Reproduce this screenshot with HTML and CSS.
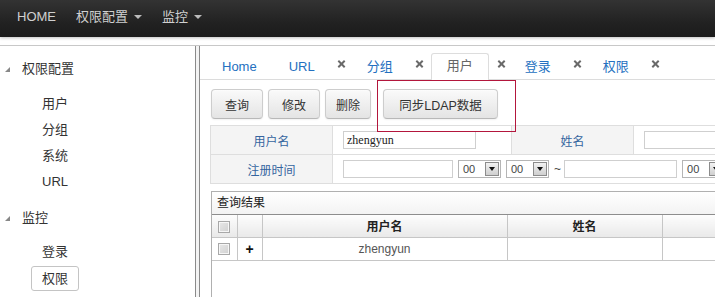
FILE: index.html
```html
<!DOCTYPE html>
<html>
<head>
<meta charset="utf-8">
<link rel="stylesheet" href="styles.css">
</head>
<body>
<div class="navbar">
  <a class="nav-link">HOME</a>
  <a class="nav-link">权限配置<span class="caret"></span></a>
  <a class="nav-link">监控<span class="caret"></span></a>
</div>
<div class="layout">
  <aside class="sidebar">
    <ul class="tree">
      <li class="group">
        <div class="node head"><span class="tri"></span>权限配置</div>
        <ul class="children">
          <li class="node">用户</li>
          <li class="node">分组</li>
          <li class="node">系统</li>
          <li class="node">URL</li>
        </ul>
      </li>
      <li class="group">
        <div class="node head"><span class="tri"></span>监控</div>
        <ul class="children">
          <li class="node">登录</li>
          <li class="node"><span class="selected">权限</span></li>
        </ul>
      </li>
    </ul>
  </aside>
  <div class="splitter"></div>
  <main class="main">
    <div class="tabbar">
      <ul class="tabs">
        <li class="tab"><a class="tab-link">Home</a></li>
        <li class="tab"><a class="tab-link">URL</a><span class="close"></span></li>
        <li class="tab"><a class="tab-link">分组</a><span class="close"></span></li>
        <li class="tab active"><a class="tab-link">用户</a><span class="close"></span></li>
        <li class="tab"><a class="tab-link">登录</a><span class="close"></span></li>
        <li class="tab"><a class="tab-link">权限</a><span class="close"></span></li>
      </ul>
    </div>
    <div class="toolbar">
      <button class="btn">查询</button>
      <button class="btn">修改</button>
      <button class="btn btn-narrow">删除</button>
      <button class="btn btn-wide">同步LDAP数据</button>
    </div>
    <table class="form">
      <tr>
        <td class="lbl">用户名</td>
        <td class="fld fld1"><span class="input input-a">zhengyun</span></td>
        <td class="lbl lbl2">姓名</td>
        <td class="fld fld3"><span class="input input-c"></span></td>
      </tr>
      <tr>
        <td class="lbl">注册时间</td>
        <td class="fld" colspan="3">
          <div class="range">
            <span class="input input-b"></span>
            <span class="sel"><span class="sel-val">00</span><span class="sel-btn"></span></span>
            <span class="sel"><span class="sel-val">00</span><span class="sel-btn"></span></span>
            <span class="tilde">~</span>
            <span class="input input-d"></span>
            <span class="sel"><span class="sel-val">00</span><span class="sel-btn"></span></span>
          </div>
        </td>
      </tr>
    </table>
    <div class="result">
      <div class="result-title">查询结果</div>
      <table class="grid">
        <tr class="grid-head">
          <th class="c-chk"><span class="chk"></span></th>
          <th class="c-exp"></th>
          <th class="c-user">用户名</th>
          <th class="c-name">姓名</th>
          <th class="c-rest"></th>
        </tr>
        <tr class="grid-row">
          <td class="c-chk"><span class="chk"></span></td>
          <td class="c-exp"><span class="plus">+</span></td>
          <td class="c-user">zhengyun</td>
          <td class="c-name"></td>
          <td class="c-rest"></td>
        </tr>
      </table>
    </div>
    <div class="annot"></div>
  </main>
</div>
</body>
</html>
```
FILE: styles.css
```css
* { box-sizing: border-box; }
html, body { margin: 0; padding: 0; }
body {
  width: 715px;
  height: 297px;
  overflow: hidden;
  background: #fff;
  font-family: "Liberation Sans", "Noto Sans CJK SC", sans-serif;
  font-size: 13px;
  color: #333;
}
ul { list-style: none; margin: 0; padding: 0; }

/* navbar */
.navbar {
  height: 37px;
  display: flex;
  align-items: center;
  padding-left: 7px;
  background: linear-gradient(to bottom, #333 0%, #222 60%, #1b1b1b 100%);
  box-shadow: 0 1px 3px rgba(0,0,0,.25);
}
.nav-link {
  display: flex;
  align-items: center;
  padding: 0 10px;
  color: #d0d0d0;
  font-size: 13px;
  line-height: 20px;
  margin-top: -3px;
}
.caret {
  width: 0; height: 0;
  margin-left: 6px;
  border-top: 4px solid #bbb;
  border-left: 4px solid transparent;
  border-right: 4px solid transparent;
}

/* layout */
.layout {
  display: flex;
  margin-top: 8px;
  height: 252px;
  border-top: 1px solid #c8c8c8;
}
.sidebar {
  width: 196px;
  flex: none;
  border-right: 1px solid #8a8a8a;
  padding-top: 10px;
}
.splitter {
  width: 3px;
  flex: none;
  background: #f3f3f3;
}
.main {
  position: relative;
  flex: 1;
  min-width: 0;
  border-left: 1px solid #8a8a8a;
  padding-top: 7px;
  overflow: hidden;
}

/* tree */
.node {
  height: 26px;
  line-height: 26px;
  font-size: 13px;
  color: #333;
}
.head {
  display: flex;
  align-items: center;
  padding-left: 5px;
}
.tri {
  width: 0; height: 0;
  margin-right: 12px;
  border-bottom: 5px solid #888;
  border-left: 5px solid transparent;
}
.children { margin-top: 9px; padding-left: 42px; }
.group + .group { margin-top: 10px; }
.group + .group .children { margin-top: 8px; }
.selected {
  display: inline-block;
  margin-left: -11px;
  padding: 0 10px;
  height: 25px;
  line-height: 23px;
  border: 1px solid #c4c4c4;
  border-radius: 3px;
  margin-top: 1px;
}

/* tabs */
.tabbar {
  border-bottom: 1px solid #dcdcdc;
  padding-left: 6px;
  height: 27px;
}
.tabs { display: flex; align-items: center; }
.tab { display: flex; align-items: center; }
.tab-link {
  display: block;
  height: 26px;
  line-height: 24px;
  padding: 0 15px;
  border: 1px solid transparent;
  border-bottom: 0;
  color: #2470c0;
  font-size: 13px;
}
.tab.active .tab-link {
  border-color: #ddd;
  border-radius: 3px 3px 0 0;
  background: #fff;
  color: #666;
  height: 27px;
}
.tab.active { margin-left: 2px; }
.close {
  width: 7px; height: 7px;
  margin-left: 7px;
  margin-right: 6px;
  margin-top: -5px;
  position: relative;
}
.close::before, .close::after {
  content: "";
  position: absolute;
  left: -1px; top: 2px;
  width: 9px; height: 2px;
  background: #6a6a6a;
  transform: rotate(45deg);
}
.close::after { transform: rotate(-45deg); }
.tab.active .close { margin-left: 9px; margin-right: 4px; }

/* toolbar */
.toolbar {
  display: flex;
  gap: 5px;
  margin: 9px 0 0 11px;
}
.btn {
  height: 30px;
  padding: 0 13px;
  white-space: nowrap;
  font-family: "Liberation Sans", "Noto Sans CJK SC", sans-serif;
  font-size: 12px;
  color: #333;
  background: linear-gradient(to bottom, #fafafa, #e4e4e4);
  border: 1px solid #cdcdcd;
  border-bottom-color: #b8b8b8;
  border-radius: 4px;
  box-shadow: inset 0 1px 0 rgba(255,255,255,.4), 0 1px 2px rgba(0,0,0,.06);
}
.btn-narrow { padding: 0 10px; }
.btn-wide { margin-left: 7px; padding: 0; width: 115px; font-size: 12.5px; }

/* form */
.form {
  margin: 6px 0 0 10px;
  border-collapse: collapse;
  table-layout: fixed;
  width: 640px;
}
.form td {
  border: 1px solid #dedede;
  height: 29px;
  padding: 0;
}
.lbl {
  width: 122px;
  background: #f4f4f4;
  text-align: center;
  color: #35659f;
  font-size: 12px;
}
.fld1 { width: 179px; }
.lbl2 { width: 122px; }
.fld { padding-left: 10px !important; }
.input {
  display: inline-block;
  vertical-align: middle;
  height: 18px;
  border: 1px solid #cfcfcf;
  background: #fff;
  font-family: "Liberation Serif", serif;
  font-size: 12px;
  line-height: 16px;
  padding-left: 3px;
  color: #222;
}
.input-a { width: 133px; }
.input-b { width: 110px; }
.input-c { width: 120px; }
.input-d { width: 113px; }
.range { display: flex; align-items: center; gap: 5px; }
.sel {
  display: flex;
  align-items: center;
  justify-content: space-between;
  width: 43px;
  height: 18px;
  border: 1px solid #b5b5b5;
  background: #fff;
  padding: 0 1px 0 4px;
  font-size: 11px;
  color: #444;
}
.sel-btn {
  position: relative;
  width: 14px; height: 14px;
  border: 1px solid #8c8c8c;
  background: linear-gradient(to bottom, #f2f2f2, #cfcfcf);
}
.sel-btn::after {
  content: "";
  position: absolute;
  left: 3px; top: 4px;
  border-top: 4px solid #111;
  border-left: 3px solid transparent;
  border-right: 3px solid transparent;
}
.tilde { margin: 0 -2px 0 0; font-size: 12px; color: #444; }

/* result */
.result {
  margin: 7px 0 0 11px;
  width: 620px;
  border: 1px solid #b0b0b0;
  border-right: 0;
  height: 120px;
}
.result-title {
  height: 23px;
  line-height: 22px;
  padding-left: 5px;
  font-size: 12px;
  color: #222;
  background: linear-gradient(to bottom, #fff, #f3f3f3);
  border-bottom: 1px solid #8d8d8d;
}
.grid {
  border-collapse: collapse;
  table-layout: fixed;
  width: 600px;
}
.grid th, .grid td {
  border: 1px solid #c6c6c6;
  border-top: 0;
  padding: 0;
  text-align: center;
  font-size: 12px;
  height: 23px;
}
.grid th:first-child, .grid td:first-child { border-left: 0; }
.grid-head th {
  height: 22px;
  background: linear-gradient(to bottom, #fdfdfd, #e9e9e9);
  color: #222;
  font-weight: bold;
}
.grid-row td { color: #555; }
.c-chk { width: 25px; }
.c-exp { width: 25px; }
.c-user { width: 245px; }
.c-name { width: 155px; }
.chk {
  display: inline-block;
  width: 12px; height: 12px;
  vertical-align: middle;
  border: 1px solid #a8a8a8;
  background: linear-gradient(to bottom right, #e8e8e8, #d0d0d0);
  box-shadow: inset 0 0 0 1px #f6f6f6;
}
.plus { font-weight: bold; color: #111; font-size: 14px; }

/* annotation overlay */
.annot {
  position: absolute;
  left: 177px;
  top: 34px;
  width: 139px;
  height: 52px;
  border: 1px solid #b3163c;
}
```
